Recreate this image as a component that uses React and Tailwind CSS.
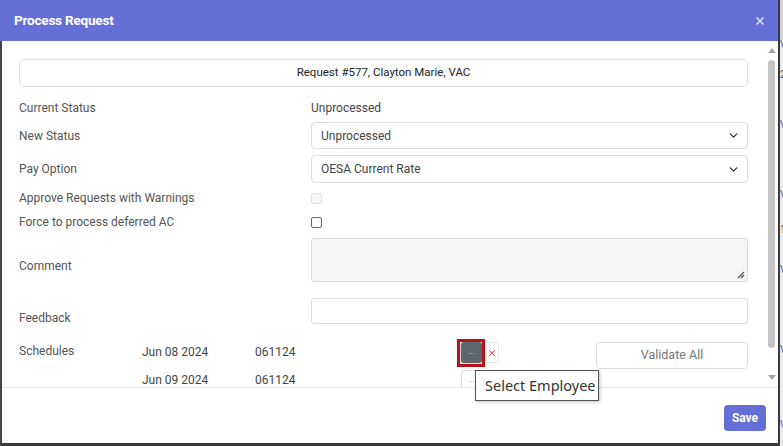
import React from 'react';
import { ChevronDown, X } from 'lucide-react';

const labelCls = 'w-[292px] shrink-0 text-[12px] text-[#555]';

const Select = ({ value, h }) => (
  <div className={`flex-1 ${h} flex items-center justify-between pl-[9px] pr-[7px] border border-[#dcdce0] rounded-[4px] bg-white text-[12px] text-[#444]`}>
    <span>{value}</span>
    <ChevronDown size={13} strokeWidth={2.5} className="text-[#333]" />
  </div>
);

const Checkbox = ({ disabled }) => (
  <div
    className={`w-[11px] h-[11px] rounded-[2px] border ${
      disabled ? 'border-[#e0e0e0] bg-[#f6f6f6]' : 'border-[#666] bg-white'
    }`}
  />
);

const ScheduleRow = ({ date, code, active }) => (
  <div className="flex items-start h-[28px]">
    <div className="w-[113px] pt-[1px]">{date}</div>
    <div className="w-[206px] pt-[1px]">{code}</div>
    <div className="relative">
      <div
        className={`w-[21px] h-[21px] rounded-[3px] flex items-center justify-center text-[9px] leading-none pb-[3px] ${
          active ? 'bg-[#5f656d] text-[#ddd] shadow-[0_0_6px_rgba(0,0,0,0.35)]' : 'bg-white border border-[#dedede] text-[#999]'
        }`}
      >
        ...
      </div>
      {active && (
        <div className="absolute -left-[4px] -top-[3px] w-[28px] h-[28px] border-[3px] border-[#b3141c]" />
      )}
    </div>
    <div className="ml-[3px] w-[14px] h-[21px] border border-[#e6e6e6] rounded-[2px] bg-white flex items-center justify-center">
      <X size={10} strokeWidth={2.5} className="text-[#e2445c]" />
    </div>
  </div>
);

export default function App() {
  return (
    <div className="relative w-[783px] h-[446px] flex bg-[#3a3a3a] overflow-hidden font-['Roboto',sans-serif]">
      <div className="w-[778px] h-full flex flex-col">
        {/* header */}
        <div className="h-[41px] shrink-0 bg-[#6470d6] flex items-center justify-between pl-[14px] pr-[12px]">
          <span className="text-white font-bold text-[13.5px] tracking-[-0.2px]">Process Request</span>
          <X size={12} strokeWidth={3.5} className="text-[#d8dbf5]" />
        </div>

        <div className="flex-1 flex flex-col border-l-2 border-[#444] bg-white">
          {/* body */}
          <div className="h-[346px] shrink-0 flex overflow-hidden">
            <div className="flex-1 px-[17px] pt-[18px] overflow-hidden">
              <div className="h-[28px] border border-[#e2e2e6] rounded-[5px] flex items-center justify-center text-[11.5px] text-[#222]">
                Request #577, Clayton Marie, VAC
              </div>

              <div className="flex items-center h-[20px] mt-[11px]">
                <div className={labelCls}>Current Status</div>
                <div className="text-[12px] text-[#444]">Unprocessed</div>
              </div>

              <div className="flex items-center mt-[4px]">
                <div className={labelCls}>New Status</div>
                <Select value="Unprocessed" h="h-[27px]" />
              </div>

              <div className="flex items-center mt-[6px]">
                <div className={labelCls}>Pay Option</div>
                <Select value="OESA Current Rate" h="h-[28px]" />
              </div>

              <div className="flex items-center h-[20px] mt-[5px]">
                <div className={labelCls}>Approve Requests with Warnings</div>
                <Checkbox disabled />
              </div>

              <div className="flex items-center h-[20px] mt-[4px]">
                <div className={labelCls}>Force to process deferred AC</div>
                <Checkbox />
              </div>

              <div className="flex items-start mt-[6px]">
                <div className={`${labelCls} pt-[19px]`}>Comment</div>
                <div className="relative flex-1 h-[44px] bg-[#f5f5f7] border border-[#dcdce0] rounded-[3px]">
                  <svg className="absolute right-[2px] bottom-[2px]" width="8" height="8" viewBox="0 0 8 8">
                    <path d="M7 1 L1 7 M7 4 L4 7" stroke="#555" strokeWidth="1.2" />
                  </svg>
                </div>
              </div>

              <div className="flex items-start mt-[16px]">
                <div className={`${labelCls} pt-[11px]`}>Feedback</div>
                <div className="flex-1 h-[26px] border border-[#dcdce0] rounded-[3px] bg-white" />
              </div>

              <div className="flex items-start mt-[15px] text-[12px] text-[#444]">
                <div className="w-[123px] shrink-0 text-[#555]">Schedules</div>
                <div className="flex flex-col">
                  <ScheduleRow date="Jun 08 2024" code="061124" active />
                  <ScheduleRow date="Jun 09 2024" code="061124" />
                </div>
                <div className="ml-auto w-[152px] h-[27px] border border-[#dcdce0] rounded-[4px] flex items-center justify-center text-[12.5px] text-[#777]">
                  Validate All
                </div>
              </div>
            </div>

            {/* scrollbar */}
            <div className="w-[13px] shrink-0 flex flex-col items-center pt-[7px] pb-[7px]">
              <div className="w-0 h-0 border-l-[4px] border-r-[4px] border-b-[5px] border-l-transparent border-r-transparent border-b-[#a3a3a3]" />
              <div className="w-[7px] h-[288px] mt-[7px] rounded-[4px] bg-[#c4c4c4]" />
              <div className="flex-1" />
              <div className="w-0 h-0 border-l-[4px] border-r-[4px] border-t-[5px] border-l-transparent border-r-transparent border-t-[#a3a3a3]" />
            </div>
          </div>

          {/* footer */}
          <div className="flex-1 border-t border-[#e8e8ea] flex items-start justify-end pt-[17px] pr-[12px]">
            <div className="w-[42px] h-[26px] rounded-[4px] bg-[#6470d6] text-white font-bold text-[12px] flex items-center justify-center">
              Save
            </div>
          </div>
          <div className="h-[3px] shrink-0 bg-[#3a3a3a]" />
        </div>
      </div>

      {/* page behind the dialog */}
      <div className="w-[5px] h-full border-l-2 border-[#3a3a3a] bg-[#e9e9ee] flex flex-col text-[10px] leading-none text-[#4a57b8] overflow-hidden">
        <div className="h-[40px] bg-[#cfd0d8]" />
        <div>V</div>
        <div className="mt-[20px] text-[#555]">2</div>
        <div className="mt-[40px]">V</div>
        <div className="mt-[60px]">V</div>
        <div className="mt-[25px] text-[#555]">1</div>
        <div className="mt-[30px]">V</div>
        <div className="mt-[70px]">V</div>
        <div className="mt-[65px]">V</div>
      </div>

      {/* tooltip over the select-employee button */}
      <div className="absolute left-[475px] top-[370px] z-10 w-[124px] h-[31px] bg-white border border-[#555] shadow-[1px_1px_3px_rgba(0,0,0,0.25)] flex items-center pl-[9px] text-[14.5px] text-[#333] font-['Noto_Sans',sans-serif]">
        Select Employee
      </div>
    </div>
  );
}
